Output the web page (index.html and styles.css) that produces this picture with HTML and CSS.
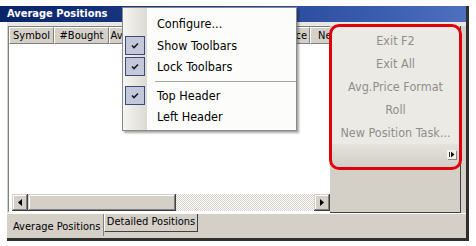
FILE: index.html
```html
<!DOCTYPE html>
<html>
<head>
<meta charset="utf-8">
<link rel="stylesheet" href="styles.css">
</head>
<body>
<div class="window">
  <div class="titlebar">Average Positions</div>
  <div class="frame">
    <div class="content">
      <div class="list">
        <div class="header">
          <div class="hcell w-sym">Symbol</div>
          <div class="hcell w-bought">#Bought</div>
          <div class="hcell w-avgb">Avg.Bought</div>
          <div class="hcell w-sold"></div>
          <div class="hcell w-avgs"></div>
          <div class="hcell w-price">Avg.Price</div>
          <div class="hcell w-net">Net Position</div>
        </div>
        <div class="rows"></div>
        <div class="hscroll">
          <div class="sbtn"><svg width="4" height="7" viewBox="0 0 4 7"><path d="M4 0 L0 3.5 L4 7 Z" fill="#000"/></svg></div>
          <div class="thumb"></div>
          <div class="track"></div>
          <div class="sbtn"><svg width="4" height="7" viewBox="0 0 4 7"><path d="M0 0 L4 3.5 L0 7 Z" fill="#000"/></svg></div>
        </div>
      </div>
      <div class="side">
        <div class="toolbar">
          <div class="titem">Exit F2</div>
          <div class="titem">Exit All</div>
          <div class="titem">Avg.Price Format</div>
          <div class="titem">Roll</div>
          <div class="titem">New Position Task...</div>
          <div class="tstrip">
            <div class="chev"><svg width="9" height="9" viewBox="0 0 9 9"><path d="M2.5 2 V7" stroke="#333" stroke-width="1"/><path d="M4 1.5 L7.5 4.5 L4 7.5 Z" fill="#111"/></svg></div>
          </div>
        </div>
        <div class="highlight"></div>
      </div>
    </div>
    <div class="tabs">
      <div class="tab active">Average Positions</div>
      <div class="tab">Detailed Positions</div>
    </div>
  </div>
  <div class="menu">
    <div class="mitem"><span class="gut"></span><span class="mlabel">Configure...</span></div>
    <div class="mitem"><span class="gut"><span class="check"><svg width="18" height="17" viewBox="0 0 18 17"><path d="M6 8.5 L8 10.5 L12 6.5" fill="none" stroke="#1a1a1a" stroke-width="1.6"/></svg></span></span><span class="mlabel">Show Toolbars</span></div>
    <div class="mitem"><span class="gut"><span class="check"><svg width="18" height="17" viewBox="0 0 18 17"><path d="M6 8.5 L8 10.5 L12 6.5" fill="none" stroke="#1a1a1a" stroke-width="1.6"/></svg></span></span><span class="mlabel">Lock Toolbars</span></div>
    <div class="msep"><span class="gut"></span><span class="line"></span></div>
    <div class="mitem"><span class="gut"><span class="check"><svg width="18" height="17" viewBox="0 0 18 17"><path d="M6 8.5 L8 10.5 L12 6.5" fill="none" stroke="#1a1a1a" stroke-width="1.6"/></svg></span></span><span class="mlabel">Top Header</span></div>
    <div class="mitem"><span class="gut"></span><span class="mlabel">Left Header</span></div>
  </div>
</div>
</body>
</html>
```

FILE: styles.css
```css
html, body {
  margin: 0;
  padding: 0;
  background: #fff;
}
body {
  font-family: "DejaVu Sans Condensed", "DejaVu Sans", sans-serif;
  font-stretch: condensed;
  font-size: 11px;
  color: #000;
}
.window {
  position: relative;
  margin-top: 6px;
  width: 469px;
  height: 235px;
  box-sizing: border-box;
  border-right: 3px solid #2e2e2e;
  display: flex;
  flex-direction: column;
}
.titlebar {
  height: 16px;
  line-height: 16px;
  padding-left: 7px;
  color: #fff;
  font-weight: bold;
  font-size: 11px;
  background: linear-gradient(to right, #0a246a 0%, #1f3f8e 45%, #3a5cae 80%, #4e70bd 100%);
}
.frame {
  flex: 1;
  margin-left: 7px;
  background: #d4d0c8;
  border-bottom: 3px solid #2e2e2e;
  display: flex;
  flex-direction: column;
}
.content {
  display: flex;
  padding-top: 4px;
  padding-left: 1px;
  padding-right: 4px;
  height: 187px;
  background: linear-gradient(#e9e7e2, #e9e7e2) top / 100% 4px no-repeat, #d4d0c8;
}
.list {
  width: 322px;
  border-top: 1px solid #808080;
  border-left: 1px solid #808080;
  background: #fff;
  display: flex;
  flex-direction: column;
  border-bottom: 2px solid #fff;
  box-sizing: border-box;
}
.header {
  display: flex;
  height: 17px;
  overflow: hidden;
  white-space: nowrap;
}
.hcell {
  flex: none;
  box-sizing: border-box;
  height: 17px;
  line-height: 15px;
  text-align: center;
  background: #d4d0c8;
  border-top: 1px solid #fff;
  border-left: 1px solid #fff;
  border-right: 1px solid #808080;
  border-bottom: 1px solid #808080;
  overflow: hidden;
}
.w-sym { width: 45px; }
.w-bought { width: 55px; }
.w-avgb { width: 60px; }
.w-sold { width: 45px; }
.w-avgs { width: 52px; }
.w-price {
  width: 44px;
  display: flex;
  justify-content: flex-end;
  padding-right: 2px;
}
.w-net { width: 72px; text-align: left; padding-left: 7px; }
.rows {
  flex: 1;
  background: #fff;
}
.hscroll {
  height: 17px;
  display: flex;
  padding-left: 3px;
  background: #fff;
}
.sbtn, .thumb {
  width: 16px;
  height: 17px;
  box-sizing: border-box;
  background: #d4d0c8;
  box-shadow: inset -1px -1px #404040, inset 1px 1px #d4d0c8, inset -2px -2px #808080, inset 2px 2px #fff;
  display: flex;
  align-items: center;
  justify-content: center;
}
.thumb {
  width: 148px;
}
.track {
  flex: 1;
  background: repeating-conic-gradient(#fff 0 25%, #d4d0c8 0 50%) 0 0 / 2px 2px;
}
.side {
  position: relative;
  width: 131px;
  box-sizing: border-box;
  border-right: 1px solid #404040;
  border-bottom: 1px solid #404040;
  background: #d4d0c8;
}
.toolbar {
  margin: 1px 0 0 2px;
  width: 127px;
  height: 140px;
  border-radius: 6px;
  overflow: hidden;
  background: #eceae5;
  display: flex;
  flex-direction: column;
  padding-top: 2px;
  box-sizing: border-box;
}
.titem {
  height: 23px;
  line-height: 23px;
  text-align: center;
  color: #8e8e8e;
  font-size: 12.5px;
  white-space: nowrap;
}
.tstrip {
  flex: 1;
  background: linear-gradient(#e4e2dc, #d2cfc6);
  display: flex;
  justify-content: flex-end;
  align-items: flex-start;
  padding: 6px 3px 0 0;
}
.chev {
  width: 9px;
  height: 9px;
  background: #f4f3ef;
  box-shadow: 1px 1px #8a877f;
  display: flex;
}
.highlight {
  position: absolute;
  left: -1px;
  top: -2px;
  width: 133px;
  height: 146px;
  box-sizing: border-box;
  border: 3px solid #e0000b;
  border-radius: 10px;
}
.tabs {
  flex: 1;
  display: flex;
  align-items: flex-start;
  border-top: 1px solid #fff;
  background: #d4d0c8;
}
.tab {
  font-size: 11px;
  white-space: nowrap;
}
.tab.active {
  width: 97px;
  padding-left: 6px;
  padding-top: 6px;
  box-sizing: border-box;
  line-height: 14px;
  border-right: 1px solid #808080;
  height: 22px;
}
.tab:not(.active) {
  width: 94px;
  height: 18px;
  line-height: 16px;
  text-align: center;
  box-sizing: border-box;
  border-left: 1px solid #fff;
  border-right: 1px solid #404040;
  border-bottom: 1px solid #404040;
}
.menu {
  position: absolute;
  left: 122px;
  top: 1px;
  width: 175px;
  box-sizing: border-box;
  border: 1px solid #8a8a8a;
  background: #fcfcfa;
  padding: 5px 0 2px 0;
  box-shadow: 2px 2px 2px rgba(0,0,0,0.35);
  font-size: 12.5px;
  background-image: linear-gradient(to right, #f6f5f1, #dcdad2);
  background-size: 24px 100%;
  background-repeat: no-repeat;
}
.mitem {
  display: flex;
  align-items: center;
  height: 21.5px;
}
.gut {
  width: 24px;
  flex: none;
  display: flex;
  align-items: center;
  padding-left: 2px;
  box-sizing: border-box;
}
.check {
  width: 20px;
  height: 19px;
  box-sizing: border-box;
  border: 1px solid #3b4a78;
  background: #c3c8da;
  display: flex;
  align-items: center;
  justify-content: center;
}
.mlabel {
  padding-left: 10px;
  white-space: nowrap;
}
.msep {
  height: 7px;
  display: flex;
  align-items: center;
}
.msep .line {
  flex: 1;
  margin-left: 8px;
  height: 1px;
  background: #a6a6a6;
}
```
